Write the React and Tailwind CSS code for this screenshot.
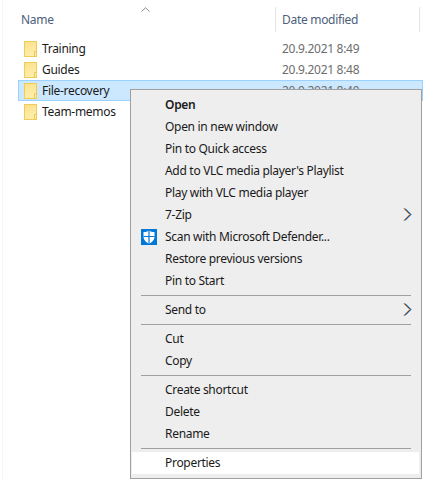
const F = "font-['Noto_Sans','Open_Sans',sans-serif]";

function Folder() {
  return (
    <svg width="13" height="16" viewBox="0 0 13 16" className="shrink-0">
      <defs>
        <linearGradient id="fg" x1="0" y1="0" x2="0.3" y2="1">
          <stop offset="0" stopColor="#fbe08c" />
          <stop offset="1" stopColor="#feeeaa" />
        </linearGradient>
      </defs>
      <rect x="0.5" y="0.5" width="12" height="15" fill="url(#fg)" stroke="#f0cc58" />
      <path d="M10.5 15.5V10.5H12.5" fill="none" stroke="#ecc94f" />
    </svg>
  );
}

function Row({ name, date, selected }) {
  return (
    <div className={`flex h-[21px] items-center ml-[18px] pl-[5px] border ${selected ? "bg-[#cce8ff] border-[#99d1ff]" : "border-transparent"}`}>
      <Folder />
      <span className="ml-[5px] w-[240px] text-[#1a1a1a]">{name}</span>
      <span className="text-[#6d6d6d]">{date}</span>
    </div>
  );
}

function Item({ children, bold, arrow, icon, active }) {
  return (
    <div className={`relative flex h-[22px] items-center pl-[33px] ${active ? "bg-white" : ""} ${bold ? "font-semibold" : ""}`}>
      {icon}
      <span>{children}</span>
      {arrow && (
        <svg width="9" height="13" viewBox="0 0 9 13" className="absolute right-[7px] top-[4px]">
          <path d="M0.700 0.500L6.700 6.500L0.700 12.500" fill="none" stroke="#d9853b" strokeWidth="1" />
          <path d="M2.300 0.500L8.300 6.500L2.300 12.500" fill="none" stroke="#2f8fe6" strokeWidth="1" />
          <path d="M1.500 0.500L7.500 6.500L1.500 12.500" fill="none" stroke="#23304a" strokeWidth="0.800" />
        </svg>
      )}
    </div>
  );
}

function Sep() {
  return <div className="h-px my-[3px] ml-[9px] mr-[8px] bg-[#a0a0a0]" />;
}

function Shield() {
  return (
    <svg width="16" height="16" viewBox="0 0 16 16" className="absolute left-[9px] top-[3px]">
      <rect width="16" height="16" fill="#0078d7" />
      <path d="M8 1.500C6.500 2.500 4.500 3 2.500 3V8C2.500 11 5 13.200 8 14.700C11 13.200 13.500 11 13.500 8V3C11.500 3 9.500 2.500 8 1.500Z" fill="#fff" />
      <path d="M8 1.500V14.700M2.500 7.500H13.500" stroke="#0078d7" strokeWidth="1.200" />
    </svg>
  );
}

export default function App() {
  return (
    <div className={`relative h-[479px] w-[423px] overflow-hidden bg-white text-[12px] leading-none tracking-[-0.3px] ${F}`}>
      <div className="absolute left-[2px] top-0 h-full w-px bg-[#f5f5f5]" />
      <div className="relative flex h-[38px] pl-[21px] pt-[14px] text-[#4c607a]">
        <span className="w-[261px]">Name</span>
        <span>Date modified</span>
        <svg width="9" height="5" viewBox="0 0 9 5" className="absolute left-[141px] top-[7px]">
          <path d="M0.500 4.500L4.500 0.800L8.500 4.500" fill="none" stroke="#8a8a8a" />
        </svg>
        <div className="absolute left-[275px] top-[7px] h-[25px] w-px bg-[#e5e5e5]" />
        <div className="absolute left-[419px] top-[7px] h-[25px] w-px bg-[#e5e5e5]" />
      </div>
      <Row name="Training" date="20.9.2021 8:49" />
      <Row name="Guides" date="20.9.2021 8:48" />
      <Row name="File-recovery" date="20.9.2021 8:49" selected />
      <Row name="Team-memos" date="" />

      <div className="absolute left-[130px] top-[89px] w-[292px] border border-[#a0a0a0] bg-[#eeeeee] pl-[1px] pr-[2px] py-[4px] text-[#1a1a1a]">
        <Item bold>Open</Item>
        <Item>Open in new window</Item>
        <Item>Pin to Quick access</Item>
        <Item>Add to VLC media player's Playlist</Item>
        <Item>Play with VLC media player</Item>
        <Item arrow>7-Zip</Item>
        <Item icon={<Shield />}>Scan with Microsoft Defender...</Item>
        <Item>Restore previous versions</Item>
        <Item>Pin to Start</Item>
        <Sep />
        <Item arrow>Send to</Item>
        <Sep />
        <Item>Cut</Item>
        <Item>Copy</Item>
        <Sep />
        <Item>Create shortcut</Item>
        <Item>Delete</Item>
        <Item>Rename</Item>
        <Sep />
        <Item active>Properties</Item>
      </div>
    </div>
  );
}
